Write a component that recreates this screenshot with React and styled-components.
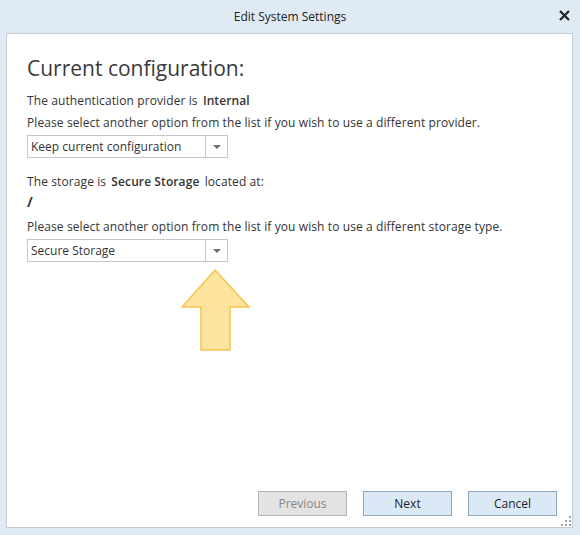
import styled, { createGlobalStyle } from "styled-components";

const GlobalStyle = createGlobalStyle`
  html, body {
    margin: 0;
    padding: 0;
    background: #dfeaf4;
  }
  body {
    font-family: "Open Sans", "Noto Sans", sans-serif;
    color: #333;
  }
`;

const Window = styled.div`
  width: 580px;
  height: 535px;
  display: flex;
  flex-direction: column;
  background: #dfeaf4;
  box-sizing: border-box;
`;

const TitleBar = styled.div`
  height: 33px;
  display: flex;
  align-items: center;
  justify-content: center;
  position: relative;
  font-size: 12px;
  color: #222;
`;

const CloseButton = styled.button`
  position: absolute;
  right: 9px;
  top: 8px;
  width: 14px;
  height: 14px;
  padding: 0;
  border: none;
  background: none;
  display: flex;
  align-items: center;
  justify-content: center;
`;

const Panel = styled.div`
  margin: 0 7px 0 6px;
  height: 495px;
  box-sizing: border-box;
  background: #fff;
  border: 1px solid #c5ccd3;
  display: flex;
  flex-direction: column;
  padding: 20px 15px 11px 20px;
  position: relative;
`;

const Heading = styled.h1`
  margin: 0 0 8px;
  font-size: 21px;
  font-weight: 400;
  color: #3a3a3a;
  line-height: 28px;
`;

const Line = styled.p`
  margin: 0;
  font-size: 12px;
  line-height: 22px;
  letter-spacing: 0.1px;
  b {
    font-weight: 600;
    margin: 0 2px;
  }
`;

const Path = styled.div`
  font-size: 14px;
  font-weight: 700;
  line-height: 14px;
  margin: 2px 0 7px;
`;

const Select = styled.div`
  width: 201px;
  height: 23px;
  box-sizing: border-box;
  border: 1px solid #c3c7ca;
  display: flex;
  align-items: center;
  font-size: 12px;
  margin-top: ${({ $gap }) => $gap ?? 1}px;
`;

const SelectText = styled.span`
  flex: 1;
  padding-left: 3px;
`;

const SelectArrow = styled.span`
  width: 21px;
  height: 100%;
  border-left: 1px solid #c3c7ca;
  display: flex;
  align-items: center;
  justify-content: center;
  &::after {
    content: "";
    border-left: 4px solid transparent;
    border-right: 4px solid transparent;
    border-top: 4px solid #6a6a6a;
  }
`;

const Spacer = styled.div`
  height: ${({ $h }) => $h}px;
`;

const Pointer = styled.svg`
  margin: 7px 0 0 154px;
  display: block;
`;

const Footer = styled.div`
  margin-top: auto;
  display: flex;
  justify-content: flex-end;
  gap: 16px;
`;

const Button = styled.button`
  width: 89px;
  height: 25px;
  box-sizing: border-box;
  font-family: "Open Sans", "Noto Sans", sans-serif;
  font-size: 12px;
  background: ${({ disabled }) => (disabled ? "#e3e3e3" : "#dbe9f6")};
  color: ${({ disabled }) => (disabled ? "#888" : "#222")};
  border: 1px solid ${({ disabled }) => (disabled ? "#b5b5b5" : "#94a9bd")};
  padding: 0;
`;

const Grip = styled.svg`
  position: absolute;
  right: 1px;
  bottom: 1px;
`;

export default function App() {
  return (
    <>
      <GlobalStyle />
      <Window>
        <TitleBar>
          Edit System Settings
          <CloseButton>
            <svg width="11" height="11" viewBox="0 0 11 11">
              <path d="M1 1L10 10M10 1L1 10" stroke="#222" strokeWidth="2.2" />
            </svg>
          </CloseButton>
        </TitleBar>
        <Panel>
          <Heading>Current configuration:</Heading>
          <Line>
            The authentication provider is <b>Internal</b>
          </Line>
          <Line>Please select another option from the list if you wish to use a different provider.</Line>
          <Select>
            <SelectText>Keep current configuration</SelectText>
            <SelectArrow />
          </Select>
          <Spacer $h={13} />
          <Line>
            The storage is <b>Secure Storage</b> located at:
          </Line>
          <Path>/</Path>
          <Line>Please select another option from the list if you wish to use a different storage type.</Line>
          <Select>
            <SelectText>Secure Storage</SelectText>
            <SelectArrow />
          </Select>
          <Pointer width="70" height="83" viewBox="0 0 70 83">
            <path
              d="M34 1L68 38H49V81H20V38H1Z"
              fill="#fce49c"
              stroke="#f7c24d"
              strokeWidth="1.5"
              strokeLinejoin="miter"
            />
          </Pointer>
          <Footer>
            <Button disabled>Previous</Button>
            <Button>Next</Button>
            <Button>Cancel</Button>
          </Footer>
          <Grip width="10" height="10" viewBox="0 0 10 10">
            <g fill="#9aa3ab">
              <rect x="8" y="0" width="2" height="2" />
              <rect x="4" y="4" width="2" height="2" />
              <rect x="8" y="4" width="2" height="2" />
              <rect x="0" y="8" width="2" height="2" />
              <rect x="4" y="8" width="2" height="2" />
              <rect x="8" y="8" width="2" height="2" />
            </g>
          </Grip>
        </Panel>
      </Window>
    </>
  );
}
